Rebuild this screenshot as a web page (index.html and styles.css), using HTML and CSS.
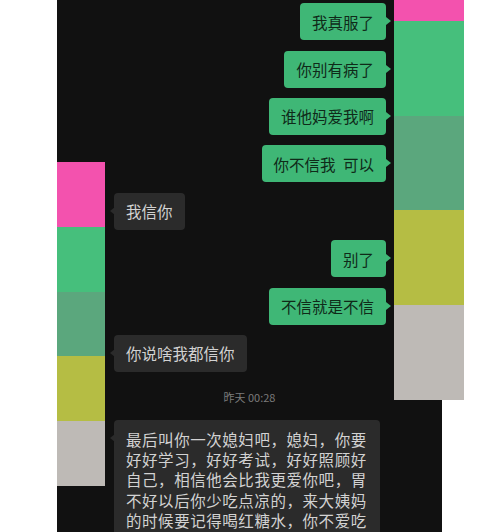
FILE: index.html
```html
<!DOCTYPE html>
<html lang="zh-CN">
<head>
<meta charset="utf-8">
<title>聊天截图</title>
<link rel="stylesheet" href="styles.css">
</head>
<body>
<div class="page">
  <div class="screen">
    <div class="row me"><div class="bubble green">我真服了</div></div>
    <div class="row me"><div class="bubble green">你别有病了</div></div>
    <div class="row me"><div class="bubble green">谁他妈爱我啊</div></div>
    <div class="row me"><div class="bubble green wide">你不信我 可以</div></div>
    <div class="row them"><div class="bubble dark">我信你</div></div>
    <div class="row me"><div class="bubble green">别了</div></div>
    <div class="row me"><div class="bubble green">不信就是不信</div></div>
    <div class="row them"><div class="bubble dark">你说啥我都信你</div></div>
    <div class="time">昨天 00:28</div>
    <div class="row them"><div class="bubble dark long">最后叫你一次媳妇吧，媳妇，你要好好学习，好好考试，好好照顾好自己，相信他会比我更爱你吧，胃不好以后你少吃点凉的，来大姨妈的时候要记得喝红糖水，你不爱吃</div></div>
  </div>
  <div class="strip strip-left">
    <div class="sw pink"></div>
    <div class="sw green-a"></div>
    <div class="sw green-b"></div>
    <div class="sw olive"></div>
    <div class="sw gray"></div>
  </div>
  <div class="strip strip-right">
    <div class="sw pink"></div>
    <div class="sw green-a"></div>
    <div class="sw green-b"></div>
    <div class="sw olive"></div>
    <div class="sw gray"></div>
  </div>
</div>
</body>
</html>
```
FILE: styles.css
```css
html, body {
  margin: 0;
  padding: 0;
  background: #ffffff;
}

.page {
  position: relative;
  width: 500px;
  height: 532px;
  overflow: hidden;
  background: #ffffff;
  font-family: "Noto Sans CJK SC", "Noto Sans", sans-serif;
}

.screen {
  box-sizing: border-box;
  margin-left: 57px;
  width: 385px;
  height: 532px;
  background: #111111;
  padding-top: 3.3px;
  display: flex;
  flex-direction: column;
  gap: 10.4px;
  overflow: hidden;
}

.row {
  display: flex;
  flex-shrink: 0;
}

.row.me {
  justify-content: flex-end;
  padding-right: 56px;
}

.row.them {
  justify-content: flex-start;
  padding-left: 57px;
}

.bubble {
  position: relative;
  padding: 8.35px 12px;
  font-size: 15.5px;
  line-height: 20.3px;
  border-radius: 4px;
  white-space: pre;
}

.bubble.wide {
  word-spacing: 4px;
}

.bubble.green {
  background: #3fb776;
  color: #0f2a19;
}

.bubble.dark {
  background: #2b2b2b;
  color: #d2d2d2;
}

.bubble::after {
  content: "";
  position: absolute;
  top: 14px;
  width: 0;
  height: 0;
  border-top: 4.5px solid transparent;
  border-bottom: 4.5px solid transparent;
}

.bubble.green::after {
  right: -4.5px;
  border-left: 5px solid #3fb776;
}

.bubble.dark::after {
  left: -4.5px;
  border-right: 5px solid #2b2b2b;
}

.bubble.long {
  white-space: normal;
  width: 242px;
  letter-spacing: 0.55px;
  padding-right: 12px;
}

.time {
  flex-shrink: 0;
  text-align: center;
  font-size: 11px;
  line-height: 16px;
  color: #7b7b7b;
  margin: 6.8px 0 4.9px;
}

.strip {
  position: absolute;
  display: flex;
  flex-direction: column;
}

.strip-left {
  left: 57px;
  top: 162px;
  width: 48px;
}

.strip-left .sw {
  height: 64.8px;
}

.strip-right {
  left: 394px;
  top: -74px;
  width: 70px;
}

.strip-right .sw {
  height: 94.8px;
}

.pink { background: #f352ae; }
.green-a { background: #46bf7c; }
.green-b { background: #5ba77d; }
.olive { background: #b5bd44; }
.gray { background: #bebab6; }
```
